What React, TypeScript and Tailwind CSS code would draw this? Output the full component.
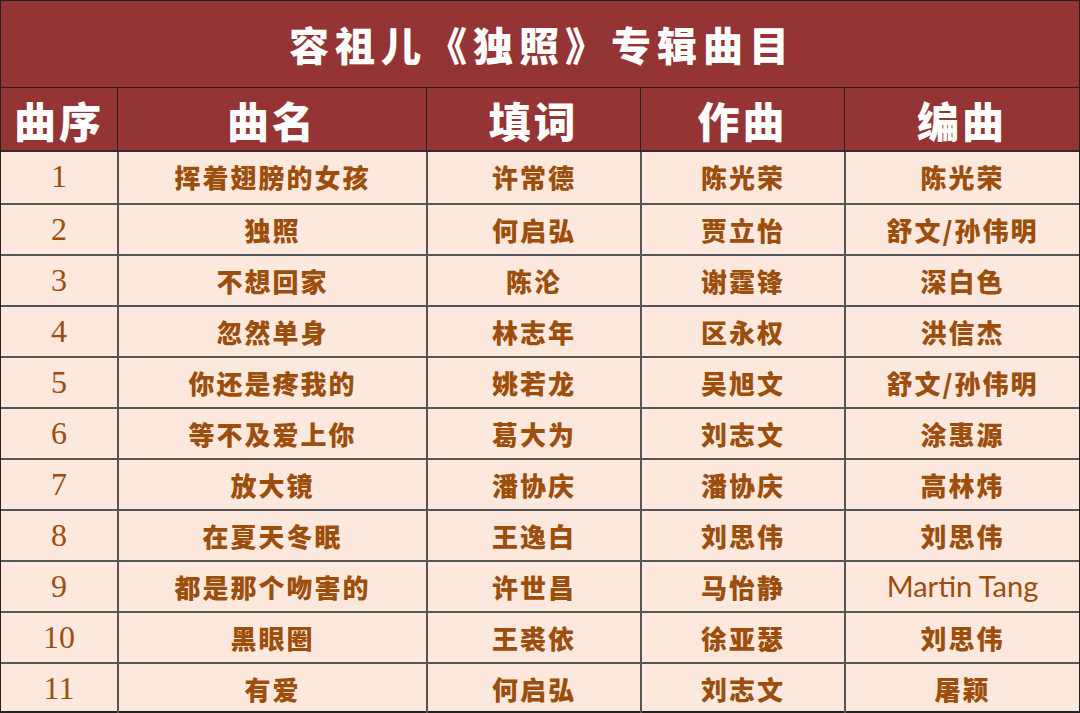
const songs = [
  ["1", "挥着翅膀的女孩", "许常德", "陈光荣", "陈光荣"],
  ["2", "独照", "何启弘", "贾立怡", "舒文/孙伟明"],
  ["3", "不想回家", "陈沦", "谢霆锋", "深白色"],
  ["4", "忽然单身", "林志年", "区永权", "洪信杰"],
  ["5", "你还是疼我的", "姚若龙", "吴旭文", "舒文/孙伟明"],
  ["6", "等不及爱上你", "葛大为", "刘志文", "涂惠源"],
  ["7", "放大镜", "潘协庆", "潘协庆", "高林炜"],
  ["8", "在夏天冬眠", "王逸白", "刘思伟", "刘思伟"],
  ["9", "都是那个吻害的", "许世昌", "马怡静", "Martin Tang"],
  ["10", "黑眼圈", "王裘依", "徐亚瑟", "刘思伟"],
  ["11", "有爱", "何启弘", "刘志文", "屠颖"],
];

const headers = ["曲序", "曲名", "填词", "作曲", "编曲"];

const cjk = "font-['Noto_Sans_CJK_SC',sans-serif]";
const cols = "grid grid-cols-[116px_309px_214px_204px_1fr]";

export default function App() {
  return (
    <div className="h-[713px] w-[1080px] overflow-hidden bg-[#fce8dc]">
      <div className="h-[713px] w-[1080px] border border-[#222] border-b-2">
        {/* Title */}
        <div
          className={`flex h-[87px] items-center justify-center border-b border-[#222] bg-[#943434] pl-[4px] text-[40px] font-black tracking-[6px] text-white ${cjk}`}
        >
          容祖儿《独照》专辑曲目
        </div>

        {/* Header */}
        <div className={`${cols} h-[64px] border-b-2 border-[#3a2a2a] bg-[#943434]`}>
          {headers.map((h, i) => (
            <div
              className={`flex items-center justify-center text-[42px] font-black tracking-[3px] text-white ${cjk} ${
                i > 0 ? "border-l border-[#222]" : ""
              }`}
              key={h}
            >
              {h}
            </div>
          ))}
        </div>

        {/* Rows */}
        {songs.map((row, r) => (
          <div
            className={`${cols} h-[51px] ${r > 0 ? "border-t-2 border-[#555]" : ""}`}
            key={row[0]}
          >
            {row.map((cell, i) => (
              <div
                className={`flex items-center justify-center pb-[5px] text-[#9c4e0c] ${
                  i > 0 ? "border-l-2 border-[#555]" : ""
                } ${
                  i === 0
                    ? "font-['Liberation_Serif',serif] text-[32px]"
                    : cell === "Martin Tang"
                      ? "font-['Lato',sans-serif] text-[29px]"
                      : `${cjk} text-[26px] font-black tracking-[2px]`
                }`}
                key={i}
              >
                {cell}
              </div>
            ))}
          </div>
        ))}
      </div>
    </div>
  );
}
